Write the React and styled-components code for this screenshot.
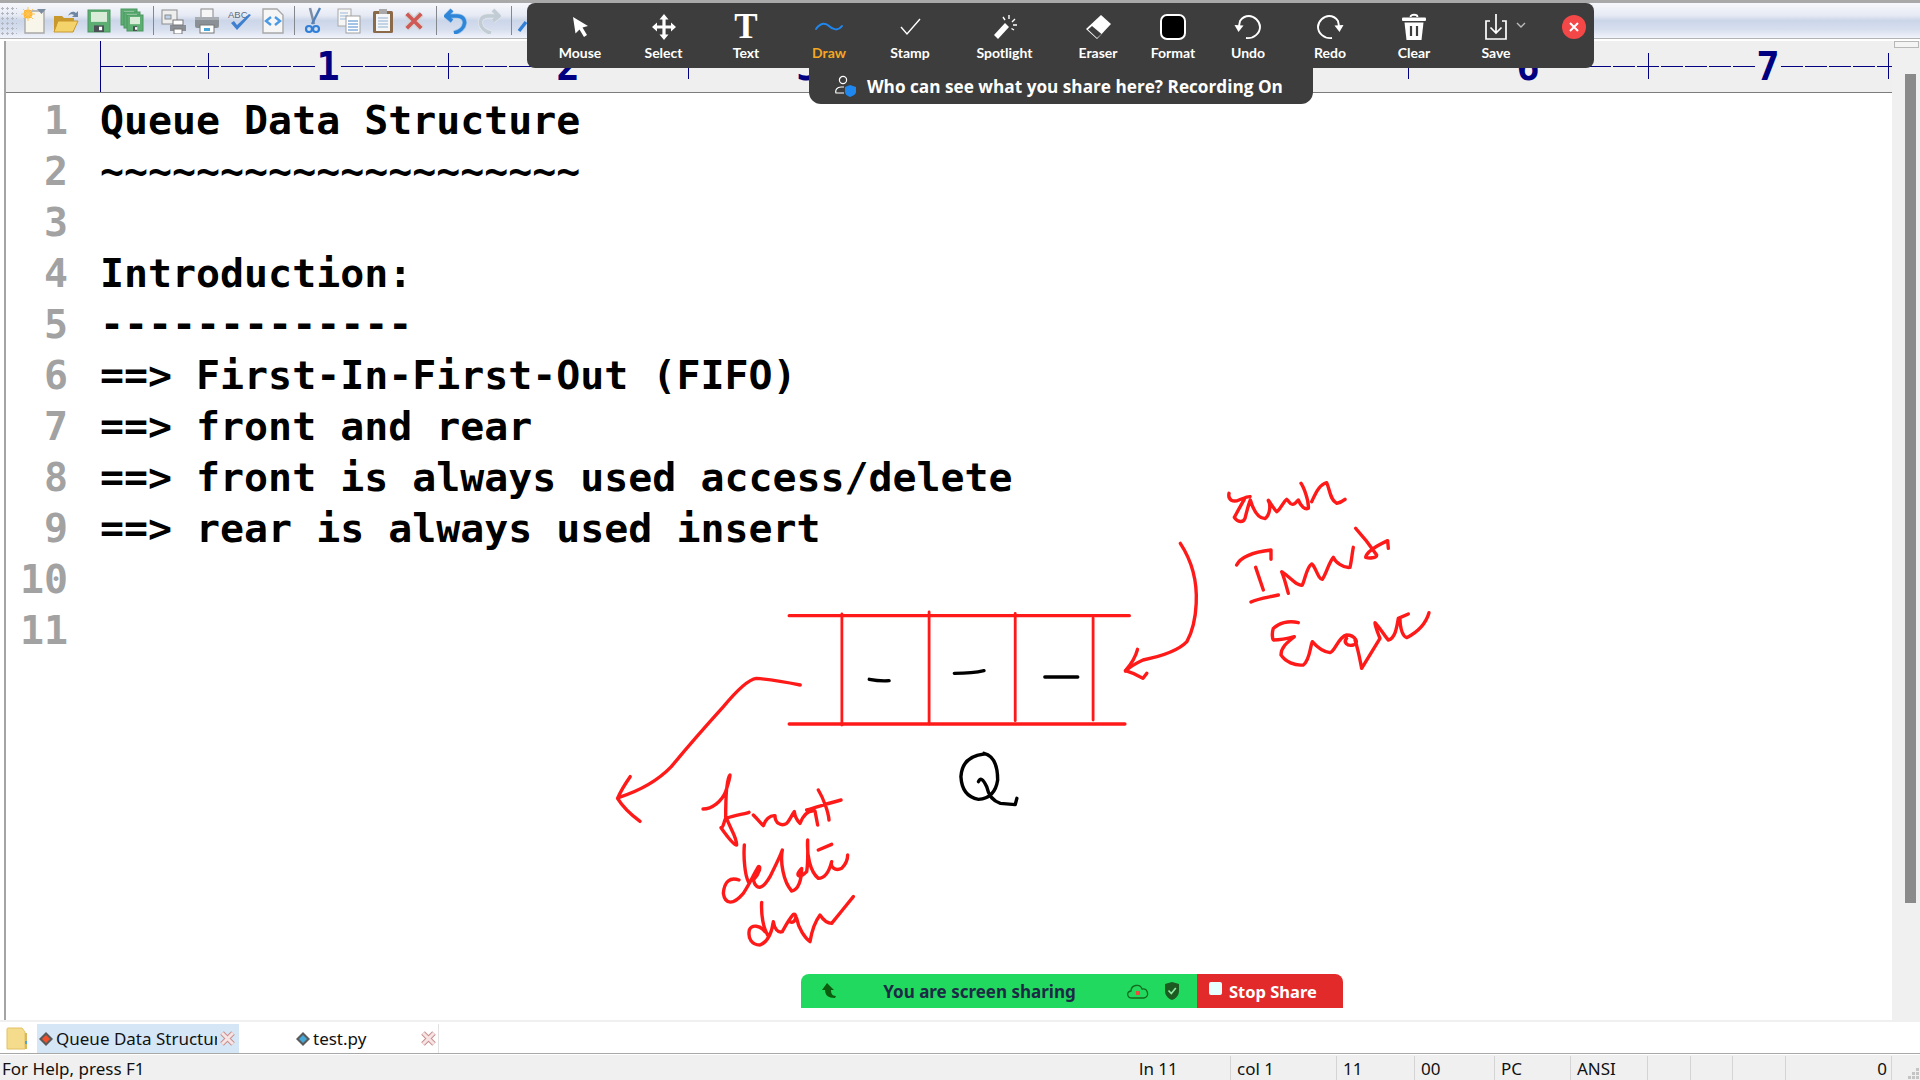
import React from 'react';
import styled, { createGlobalStyle } from 'styled-components';

const GlobalStyle = createGlobalStyle`
  html, body {
    margin: 0;
    padding: 0;
    background: #fff;
    overflow: hidden;
  }
`;

const lines = [
  'Queue Data Structure',
  '~~~~~~~~~~~~~~~~~~~~',
  '',
  'Introduction:',
  '-------------',
  '==> First-In-First-Out (FIFO)',
  '==> front and rear',
  '==> front is always used access/delete',
  '==> rear is always used insert',
  '',
  '',
];

const statusPanels = [
  { w: 98, text: 'ln 11' },
  { w: 106, text: 'col 1' },
  { w: 78, text: '11' },
  { w: 80, text: '00' },
  { w: 76, text: 'PC' },
  { w: 77, text: 'ANSI' },
  { w: 43, text: '' },
  { w: 42, text: '' },
  { w: 53, text: '' },
  { w: 106, text: '0', right: true },
];

const getZoomTools = () => [
  { label: 'Mouse', w: 84, icon: <MouseIcon /> },
  { label: 'Select', w: 83, icon: <SelectIcon /> },
  { label: 'Text', w: 82, icon: <TextGlyph>T</TextGlyph> },
  { label: 'Draw', w: 84, icon: <DrawIcon />, active: true },
  { label: 'Stamp', w: 78, icon: <StampIcon /> },
  { label: 'Spotlight', w: 111, icon: <SpotlightIcon /> },
  { label: 'Eraser', w: 76, icon: <EraserIcon /> },
  { label: 'Format', w: 74, icon: <FormatSwatch /> },
  { label: 'Undo', w: 76, icon: <UndoIcon /> },
  { label: 'Redo', w: 88, icon: <RedoIcon /> },
  { label: 'Clear', w: 80, icon: <ClearIcon /> },
  { label: 'Save', w: 84, icon: <SaveIcon /> },
];

function MouseIcon() {
  return (
    <svg width="26" height="26" viewBox="0 0 26 26">
      <path d="M6 3 L21 12 L15.5 13.5 L20 21 L17 23 L12.5 15.5 L8.5 19.5 Z" fill="#fff" />
    </svg>
  );
}

function SelectIcon() {
  return (
    <svg width="26" height="28" viewBox="0 0 26 28">
      <path d="M13 1 L17.5 6.5 H14.6 V12.4 H20 V9.5 L25 14 L20 18.5 V15.6 H14.6 V21.5 H17.5 L13 27 L8.5 21.5 H11.4 V15.6 H6 V18.5 L1 14 L6 9.5 V12.4 H11.4 V6.5 H8.5 Z" fill="#fff" />
    </svg>
  );
}

function DrawIcon() {
  return (
    <svg width="30" height="14" viewBox="0 0 30 14">
      <path d="M2 9 C7 2 12 3 15 6 C19 10 24 11 28 6" fill="none" stroke="#1f87f0" strokeWidth="2" strokeLinecap="round" />
    </svg>
  );
}

function StampIcon() {
  return (
    <svg width="24" height="20" viewBox="0 0 24 20">
      <path d="M3 10 L9 17 L22 2" fill="none" stroke="#fff" strokeWidth="1.4" />
    </svg>
  );
}

function SpotlightIcon() {
  return (
    <svg width="26" height="26" viewBox="0 0 26 26">
      <path d="M2 21 L13 9 L17 13 L6 25 Z" fill="#fff" />
      <path d="M17 1 V5 M23 5 L20 8 M25 11 H21 M11 3 L13 6 M22 16 L19.5 14.5" stroke="#fff" strokeWidth="1.4" />
    </svg>
  );
}

function EraserIcon() {
  return (
    <svg width="28" height="26" viewBox="0 0 28 26">
      <path d="M17 1 L27 10 L13 25 L2 15 Z" fill="#fff" />
      <path d="M8 12 L17.5 20 L13 24 L4 15.5 Z" fill="#3c3d3c" />
    </svg>
  );
}

function UndoIcon() {
  return (
    <svg width="28" height="26" viewBox="0 0 28 26">
      <path d="M12 24 C20 25 26 19 26 13 C26 7 20 2 15 2 C11 2 8 4 6 7 L5 12" fill="none" stroke="#fff" strokeWidth="1.9" />
      <path d="M0.5 11 L9.5 11.5 L4.5 18 Z" fill="#fff" />
    </svg>
  );
}

function RedoIcon() {
  return (
    <svg width="28" height="26" viewBox="0 0 28 26">
      <path d="M16 24 C8 25 2 19 2 13 C2 7 8 2 13 2 C17 2 20 4 22 7 L23 12" fill="none" stroke="#fff" strokeWidth="1.9" />
      <path d="M27.5 11 L18.5 11.5 L23.5 18 Z" fill="#fff" />
    </svg>
  );
}

function ClearIcon() {
  return (
    <svg width="26" height="28" viewBox="0 0 26 28">
      <path d="M9.5 4 C9.5 1 16.5 1 16.5 4" fill="none" stroke="#fff" strokeWidth="1.8" />
      <rect x="1" y="4.5" width="24" height="3.5" rx="1" fill="#fff" />
      <path d="M3.5 9.5 H22.5 L20.5 27 H5.5 Z" fill="#fff" />
      <path d="M10 13 V23 M16 13 V23" stroke="#3c3d3c" strokeWidth="2.2" />
    </svg>
  );
}

function SaveIcon() {
  return (
    <svg width="76" height="28" viewBox="0 0 76 28">
      <path d="M32 8 H28 V26 H48 V8 H44" fill="none" stroke="#fff" strokeWidth="1.7" />
      <path d="M38 1 V20 M32.5 14.5 L38 20 L43.5 14.5" fill="none" stroke="#fff" strokeWidth="1.7" />
      <path d="M59 10 L63 14 L67 10" fill="none" stroke="#bbb" strokeWidth="1.4" />
    </svg>
  );
}

function CloseGlyph() {
  return (
    <svg width="10" height="10" viewBox="0 0 10 10">
      <path d="M1 1 L9 9 M9 1 L1 9" stroke="#fff" strokeWidth="2" />
    </svg>
  );
}

function NewFileIcon() {
  return (
    <svg width="26" height="28" viewBox="0 0 26 28">
      <path d="M5 4 H24 V26 H5 Z" fill="#f8f5ea" stroke="#a8a8a8" strokeWidth="1.4" />
      <path d="M17 2 H26 L21.5 7 Z" fill="#7c8ca0" />
      <circle cx="8" cy="7" r="4.5" fill="#ffb52e" />
      <path d="M8 0 V14 M1 7 H15 M3 2 L13 12 M13 2 L3 12" stroke="#ffc65c" strokeWidth="1" />
    </svg>
  );
}

function OpenIcon() {
  return (
    <svg width="26" height="26" viewBox="0 0 26 26">
      <path d="M1 8 H9 L11 10 H21 V24 H1 Z" fill="#c9982d" />
      <path d="M5 13 H25 L20 24 H1 Z" fill="#f5d36b" stroke="#c9982d" />
      <path d="M15 8 C17 3 21 3 23 5 L25 3 V9 H19 L21 7 C19 6 17 6 15 8 Z" fill="#6f86a3" />
    </svg>
  );
}

function FloppyIcon({ x = 1, y = 2, s = 22 }) {
  return (
    <g>
      <rect x={x} y={y} width={s} height={s} fill="#5cae72" stroke="#4a9660" />
      <rect x={x + 3} y={y + 2} width={s - 6} height={s * 0.45} fill="#d8ecd8" />
      <rect x={x + 6} y={y + s * 0.7} width={s - 12} height={s * 0.3} fill="#4a5056" />
      <rect x={x + s * 0.5} y={y + s * 0.76} width={s * 0.14} height={s * 0.16} fill="#fff" />
    </g>
  );
}

function SaveFileIcon() {
  return (
    <svg width="24" height="26" viewBox="0 0 24 26">
      <FloppyIcon />
    </svg>
  );
}

function SaveAllIcon() {
  return (
    <svg width="24" height="26" viewBox="0 0 24 26">
      <FloppyIcon x={1} y={1} s={16} />
      <FloppyIcon x={4} y={4} s={16} />
      <FloppyIcon x={7} y={7} s={16} />
    </svg>
  );
}

function PreviewIcon() {
  return (
    <svg width="26" height="26" viewBox="0 0 26 26">
      <rect x="1" y="2" width="15" height="14" fill="#eee" stroke="#8c8c8c" />
      <rect x="4" y="7" width="6" height="4" fill="#bcd2ea" stroke="#8c8c8c" />
      <rect x="9" y="17" width="16" height="6" fill="#8a8f96" />
      <rect x="12" y="12" width="10" height="5" fill="#fff" stroke="#777" />
      <rect x="13" y="21" width="8" height="5" fill="#fff" stroke="#777" />
    </svg>
  );
}

function PrintIcon() {
  return (
    <svg width="26" height="26" viewBox="0 0 26 26">
      <rect x="7" y="1" width="12" height="9" fill="#f6f6f6" stroke="#888" />
      <rect x="1" y="9" width="24" height="11" rx="2" fill="#8b9097" />
      <rect x="1" y="9" width="24" height="3" fill="#a8adb4" />
      <rect x="6" y="17" width="14" height="8" fill="#fff" stroke="#777" />
      <rect x="10" y="20" width="6" height="3" fill="#4aa6d8" />
    </svg>
  );
}

function SpellIcon() {
  return (
    <svg width="26" height="26" viewBox="0 0 26 26">
      <text x="1" y="10" fontFamily="Liberation Sans, sans-serif" fontSize="9.5" fill="#5a6b82">ABC</text>
      <path d="M4 15 L10 22 L24 7 L22 6 L10 17 L7 13 Z" fill="#3f7fd0" />
    </svg>
  );
}

function CodeIcon() {
  return (
    <svg width="24" height="26" viewBox="0 0 24 26">
      <path d="M2 1 H16 L22 7 V25 H2 Z" fill="#f6f6f6" stroke="#a8a8a8" strokeWidth="1.4" />
      <path d="M10 9 L5 13 L10 17 M14 9 L19 13 L14 17" fill="none" stroke="#4b9ae6" strokeWidth="2.4" />
    </svg>
  );
}

function CutIcon() {
  return (
    <svg width="22" height="28" viewBox="0 0 22 28">
      <path d="M8 1 L12 17" stroke="#7f8ea2" strokeWidth="2.4" />
      <path d="M18 1 L10 17" stroke="#4f82bc" strokeWidth="2.4" />
      <circle cx="7" cy="22" r="3" fill="none" stroke="#2f7fd8" strokeWidth="2.2" />
      <circle cx="14" cy="22" r="3" fill="none" stroke="#2f7fd8" strokeWidth="2.2" />
    </svg>
  );
}

function CopyIcon() {
  return (
    <svg width="24" height="26" viewBox="0 0 24 26">
      <rect x="1" y="1" width="13" height="17" fill="#f6f6f6" stroke="#a8a8a8" />
      <path d="M3 5 H11 M3 8 H11 M3 11 H11" stroke="#9bb9da" />
      <rect x="9" y="8" width="14" height="17" fill="#fff" stroke="#a0a0a0" />
      <path d="M11 13 H21 M11 16 H21 M11 19 H21 M11 22 H21" stroke="#4b86c8" />
    </svg>
  );
}

function PasteIcon() {
  return (
    <svg width="22" height="26" viewBox="0 0 22 26">
      <rect x="1" y="3" width="20" height="22" rx="1.5" fill="#8b6a4a" />
      <rect x="4" y="6" width="14" height="17" fill="#f4f6f8" />
      <rect x="7" y="1" width="8" height="5" fill="#a9a9a9" />
      <path d="M6 10 H16 M6 13 H16 M6 16 H16 M6 19 H16" stroke="#8fb0d0" />
    </svg>
  );
}

function DeleteIcon() {
  return (
    <svg width="20" height="20" viewBox="0 0 22 22">
      <path d="M3 3 L19 19 M19 3 L3 19" stroke="#d2d2d2" strokeWidth="7" />
      <path d="M3 3 L19 19 M19 3 L3 19" stroke="#cf5a55" strokeWidth="4" />
    </svg>
  );
}

function ArrowBackIcon({ color, shade }) {
  return (
    <svg width="24" height="26" viewBox="0 0 24 26">
      <path d="M8 2 L2 8 L8 13 M3 8 H13 C24 8 23 22 10 25" fill="none" stroke={shade} strokeWidth="5" />
      <path d="M8 2 L2 8 L8 13 M3 8 H13 C24 8 23 22 10 25" fill="none" stroke={color} strokeWidth="3.6" />
    </svg>
  );
}

function FindIcon() {
  return (
    <svg width="22" height="26" viewBox="0 0 22 26">
      <path d="M3 23 L10 14" stroke="#2f7fd8" strokeWidth="3.4" />
    </svg>
  );
}

function FolderIcon() {
  return (
    <svg width="22" height="24" viewBox="0 0 22 24">
      <path d="M1 2 C1 1 2 1 3 1 H16 L19 5 V22 H1 Z" fill="#f4dc8c" stroke="#e2c264" />
      <path d="M19 6 H21 V22 H19 Z" fill="#d8b860" />
      <rect x="19" y="14" width="2" height="3" fill="#4aa6d8" />
    </svg>
  );
}

function DiamondIcon({ color }) {
  return (
    <svg width="14" height="14" viewBox="0 0 14 14">
      <path d="M7 0 L14 7 L7 14 L0 7 Z" fill="#5a5a5a" />
      <path d="M7 3 L11 7 L7 11 L3 7 Z" fill={color} />
    </svg>
  );
}

function TabCloseIcon() {
  return (
    <svg width="15" height="15" viewBox="0 0 15 15">
      <path d="M2 2 L13 13 M13 2 L2 13" stroke="#c88e8e" strokeWidth="5" />
      <path d="M2 2 L13 13 M13 2 L2 13" stroke="#f6e4e4" strokeWidth="3" />
    </svg>
  );
}

function StatusGrip() {
  return (
    <svg width="14" height="14" viewBox="0 0 14 14">
      <path d="M10 2 h3 v3 h-3 z M6 6 h3 v3 h-3 z M10 6 h3 v3 h-3 z M2 10 h3 v3 h-3 z M6 10 h3 v3 h-3 z M10 10 h3 v3 h-3 z" fill="#c4c4c4" />
    </svg>
  );
}

function ShareArrowIcon() {
  return (
    <svg width="16" height="18" viewBox="0 0 16 18">
      <path d="M6 1 L1 8 H4 C4 13 7 16 14 16 L15 14 C11 14 10 11 10 8 H13 Z" fill="#0b5c0f" />
    </svg>
  );
}

function CloudIcon() {
  return (
    <svg width="24" height="18" viewBox="0 0 24 18">
      <path d="M6 16 C1 16 0 10 5 9 C5 3 14 1 16 7 C22 6 24 15 18 16 Z" fill="none" stroke="#14691f" strokeWidth="1.3" />
      <rect x="10" y="9" width="4" height="4" fill="#f0483e" />
    </svg>
  );
}

function ShieldIcon() {
  return (
    <svg width="19" height="20" viewBox="-3 0 19 20">
      <path d="M8 1 L15 3 V10 C15 15 11 18 8 19 C5 18 1 15 1 10 V3 Z" fill="#1c5a22" />
      <path d="M4.5 9.5 L7.3 12.5 L11.8 7" fill="none" stroke="#8fe8a0" strokeWidth="1.7" />
    </svg>
  );
}

function NoticeIcon() {
  return (
    <svg width="22" height="22" viewBox="0 0 22 22">
      <circle cx="8" cy="5" r="3.6" fill="none" stroke="#fff" strokeWidth="1.2" />
      <path d="M9 12 H6 C2 12 0 15 1 18 H9" fill="none" stroke="#fff" strokeWidth="1.2" />
      <path d="M15 10 L21 12 V17 C21 19 18 21 15 22 C12 21 10 19 10 17 V12 Z" fill="#1f87f0" />
    </svg>
  );
}

const Drawing = () => (
  <Sketch viewBox="0 0 1920 1080">
    <g transform="translate(600 460) scale(0.5485 0.33333)">
      <Ink d="M345 467 L965 467 M345 792 L957 792" />
      <Ink d="M441 462 V795 M600 456 V792 M757 460 V782 M899 474 V780" $width={2.8} />
      <Ink d="M491 658 Q510 664 527 662 M646 640 Q680 640 700 632 M811 651 L871 651" $black />
      <Ink d="M365 675 Q320 660 285 655 Q265 660 225 740 Q170 840 130 920 Q95 980 35 1012" />
      <Ink d="M55 950 Q40 985 32 1015 Q45 1050 73 1084" />
      <Ink d="M1058 250 Q1090 330 1087 430 Q1085 500 1070 545 Q1050 580 990 600 Q970 615 958 633" />
      <Ink d="M980 568 Q975 600 958 632 Q975 640 990 655 L997 640" />
      <Ink d="M700 882 Q660 890 658 950 Q660 1010 690 1018 Q720 1015 725 960 Q725 890 700 880 M690 965 Q695 945 705 980 Q710 1020 730 1030 L757 1034 L760 1015" $black />
    </g>
    <g transform="translate(1215 470) scale(0.33333)">
      <Ink d="M42 70 C38 90 55 98 72 90 C85 85 100 78 105 80 M88 88 C78 105 70 120 58 142 C68 158 85 158 90 145 C95 125 100 105 106 90 C112 110 125 145 150 146 C165 135 168 105 160 92 C158 85 175 115 185 125 C195 120 205 95 215 88 C225 95 225 110 240 100 L250 90 C258 110 270 120 280 115 C282 90 265 50 258 40 M290 95 C300 75 310 45 335 38 C345 60 345 90 365 100 C375 98 385 92 390 88" />
      <Ink d="M65 285 C75 265 100 248 168 240 L168 268 M122 292 L145 360 M108 396 C130 385 160 382 190 375" />
      <Ink d="M220 370 C212 340 205 315 200 305 C225 320 245 350 262 345 C270 330 275 290 290 282 C300 285 310 330 322 328 C335 310 340 280 355 262 C360 275 385 295 405 292 C410 270 412 245 415 232 M422 175 C445 200 465 225 485 255 C485 265 462 265 452 262 C455 245 490 225 518 212 L520 235" />
      <Ink d="M250 458 C220 450 190 460 175 475 C170 490 172 505 175 510 C195 510 220 505 238 500 C220 515 198 530 198 555 C210 575 240 588 265 585 C285 570 285 530 292 515 C305 530 320 545 345 548 C360 545 370 500 395 495 C420 495 435 520 415 525 C395 530 385 515 395 505 M420 510 C430 540 435 570 440 595 C455 570 480 530 495 505 C485 480 478 462 480 458 C500 480 510 500 520 510 C540 505 545 475 550 445 L580 432 M555 445 C555 480 565 500 575 503 C600 490 630 470 642 428" />
    </g>
    <g transform="translate(695 765) scale(0.33333)">
      <Ink d="M24 132 C50 132 80 110 92 80 C100 55 105 40 105 30 C95 40 92 90 92 160 C85 175 85 190 78 188 C90 205 115 240 125 240 C125 215 105 190 95 160 C120 150 145 148 162 142 M175 150 C190 165 198 175 205 182 C210 165 225 150 240 152 C240 175 260 185 275 175 C285 165 290 150 298 140 C300 155 305 165 315 175 C325 150 340 135 360 138 L368 180 M370 75 C385 100 400 140 402 165 M335 135 C370 125 410 112 438 105" />
      <Ink d="M148 240 C145 280 150 330 160 350 M132 345 C105 335 88 350 85 385 C90 420 115 420 145 385 C165 355 180 320 190 305 C198 300 195 325 175 345 C185 380 205 370 225 335 C240 305 255 275 262 255 C255 290 265 350 290 378 C310 375 320 345 320 310 C300 330 310 345 335 320 C340 290 338 250 338 225 C335 270 345 320 370 340 C395 340 405 310 410 290 C405 305 420 320 440 310 C455 295 458 280 458 270 M370 255 L410 238" />
      <Ink d="M200 412 C198 450 205 490 218 510 M210 500 C195 480 170 478 163 495 C158 520 170 540 195 540 C220 530 230 505 235 470 C238 490 248 505 262 500 C270 485 280 465 295 448 C310 445 300 480 285 470 M305 460 C310 490 330 520 345 530 C350 500 360 470 375 450 C385 465 395 475 410 475 C430 450 455 420 475 395" />
    </g>
  </Sketch>
);

const App = () => (
  <Screen>
    <GlobalStyle />
    <Toolbar>
      <Grip />
      <ToolButton><NewFileIcon /></ToolButton>
      <ToolButton><OpenIcon /></ToolButton>
      <ToolButton><SaveFileIcon /></ToolButton>
      <ToolButton><SaveAllIcon /></ToolButton>
      <ToolSeparator />
      <ToolButton><PreviewIcon /></ToolButton>
      <ToolButton><PrintIcon /></ToolButton>
      <ToolButton><SpellIcon /></ToolButton>
      <ToolButton><CodeIcon /></ToolButton>
      <ToolSeparator />
      <ToolButton $w={29}><CutIcon /></ToolButton>
      <ToolButton $w={42}><CopyIcon /></ToolButton>
      <ToolButton $w={27}><PasteIcon /></ToolButton>
      <ToolButton $w={35}><DeleteIcon /></ToolButton>
      <ToolSeparator />
      <ToolButton $w={31}><ArrowBackIcon color="#2f86d8" shade="#9cc4ea" /></ToolButton>
      <ToolButton $w={35}>
        <FlipX><ArrowBackIcon color="#c2ccd4" shade="#e4e8ec" /></FlipX>
      </ToolButton>
      <ToolSeparator />
      <ToolButton $w={23}><FindIcon /></ToolButton>
    </Toolbar>

    <Workspace>
      <EditorColumn>
        <Ruler>
          <RulerTrack>
            <RulerLead />
            {[1, 2, 3, 4, 5, 6, 7].map((n) => (
              <RulerCell key={n}>
                <RulerDigit>{n}</RulerDigit>
              </RulerCell>
            ))}
            <RulerCell $end />
          </RulerTrack>
        </Ruler>
        <TextArea>
          {lines.map((line, i) => (
            <Line key={i}>
              <LineNumber>{i + 1}</LineNumber>
              <LineText>{line}</LineText>
            </Line>
          ))}
        </TextArea>
      </EditorColumn>
      <Scrollbar>
        <ScrollCap />
        <ScrollThumb />
      </Scrollbar>
    </Workspace>

    <TabBar>
      <FolderSlot><FolderIcon /></FolderSlot>
      <Tab $active>
        <DiamondIcon color="#f0512a" />
        <TabLabel>Queue Data Structure</TabLabel>
        <TabCloseIcon />
      </Tab>
      <Tab $inset={57}>
        <DiamondIcon color="#45a8d8" />
        <TabLabel>test.py</TabLabel>
        <TabCloseIcon />
      </Tab>
    </TabBar>

    <StatusBar>
      <StatusMessage>For Help, press F1</StatusMessage>
      {statusPanels.map((p, i) => (
        <StatusPanel key={i} $w={p.w} $right={p.right}>{p.text}</StatusPanel>
      ))}
      <StatusCorner><StatusGrip /></StatusCorner>
    </StatusBar>

    <Drawing />

    <ZoomNotice>
      <NoticeIcon />
      <NoticeText>Who can see what you share here? Recording On</NoticeText>
    </ZoomNotice>
    <ZoomToolbar>
      {getZoomTools().map((t) => (
        <ZoomTool key={t.label} $w={t.w} $active={t.active}>
          <ZoomIconSlot>{t.icon}</ZoomIconSlot>
          <span>{t.label}</span>
        </ZoomTool>
      ))}
      <ZoomClose><CloseGlyph /></ZoomClose>
    </ZoomToolbar>

    <ShareBar>
      <SharePane>
        <ShareArrowSlot><ShareArrowIcon /></ShareArrowSlot>
        <ShareText>You are screen sharing</ShareText>
        <CloudIcon />
        <ShieldIcon />
      </SharePane>
      <StopPane>
        <StopSquare />
        Stop Share
      </StopPane>
    </ShareBar>
  </Screen>
);

export default App;

const Screen = styled.div`
  position: relative;
  width: 1920px;
  height: 1080px;
  display: flex;
  flex-direction: column;
  background: #fff;
  overflow: hidden;
`;

const Toolbar = styled.div`
  box-sizing: border-box;
  height: 39px;
  margin-bottom: 2px;
  display: flex;
  align-items: center;
  border-top: 3px solid #a9a9a9;
  border-bottom: 1px solid #b4b4b4;
  background: linear-gradient(#f7f8fc 0%, #e6eaf4 35%, #ccd6e9 50%, #d6deee 75%, #f0f3fa 100%);
`;

const Grip = styled.div`
  width: 16.5px;
  height: 30px;
  background-image: radial-gradient(#b4b8c0 1px, transparent 1.4px);
  background-size: 5px 5px;
`;

const ToolButton = styled.div`
  width: ${(p) => p.$w || 33}px;
  flex-shrink: 0;
  display: flex;
  justify-content: center;
  align-items: center;
`;

const FlipX = styled.div`
  display: flex;
  transform: scaleX(-1);
`;

const ToolSeparator = styled.div`
  width: 1px;
  height: 29px;
  flex-shrink: 0;
  margin: 0 4px;
  background: #84888e;
`;

const Workspace = styled.div`
  flex: 1;
  min-height: 0;
  display: flex;
  margin-left: 4px;
  border-left: 2px solid #a4a4a4;
`;

const EditorColumn = styled.div`
  flex: 1;
  min-width: 0;
  display: flex;
  flex-direction: column;
`;

const Ruler = styled.div`
  box-sizing: border-box;
  height: 52px;
  flex-shrink: 0;
  display: flex;
  background: #efefef;
  border-bottom: 1px solid #7c7c7c;
`;

const RulerTrack = styled.div`
  margin-left: 94px;
  display: flex;
  border-left: 1px solid #000080;
  background-image: repeating-linear-gradient(90deg, #000080 0 22px, transparent 22px 24px);
  background-size: 100% 1px;
  background-position: 0 25px;
  background-repeat: no-repeat;
`;

const RulerLead = styled.div`
  width: 107px;
`;

const RulerCell = styled.div`
  position: relative;
  width: ${(p) => (p.$end ? '4px' : '240px')};
  display: flex;
  justify-content: center;
  align-items: center;

  &::before {
    content: '';
    position: absolute;
    left: 0;
    top: 12px;
    width: 1px;
    height: 26px;
    background: #000080;
  }
`;

const RulerDigit = styled.span`
  width: 26px;
  text-align: center;
  background: #efefef;
  color: #000080;
  font: bold 39px/30px 'DejaVu Sans Mono', monospace;
`;

const TextArea = styled.div`
  flex: 1;
  padding-top: 2px;
`;

const Line = styled.div`
  height: 51px;
  display: flex;
  align-items: center;
  font: bold 39.9px/51px 'DejaVu Sans Mono', monospace;
  white-space: pre;
`;

const LineNumber = styled.span`
  width: 62px;
  margin-right: 32px;
  text-align: right;
  color: #a2a2a2;
`;

const LineText = styled.span`
  color: #000;
`;

const Scrollbar = styled.div`
  width: 28px;
  flex-shrink: 0;
  display: flex;
  flex-direction: column;
  align-items: center;
  background: #f0f0f0;
`;

const ScrollCap = styled.div`
  box-sizing: border-box;
  width: 25px;
  height: 7px;
  background: #f4f4f4;
  border: 1px solid #b8b8b8;
`;

const ScrollThumb = styled.div`
  width: 11px;
  height: 829px;
  margin: 26px 0 0 8px;
  background: #8a8a8a;
`;

const TabBar = styled.div`
  box-sizing: border-box;
  height: 33px;
  flex-shrink: 0;
  display: flex;
  padding-top: 2px;
  border-top: 2px solid #f0f0f0;
  font: 17px 'Noto Sans', sans-serif;
  color: #111;
`;

const FolderSlot = styled.div`
  width: 37px;
  display: flex;
  align-items: center;
  padding-left: 6px;
  box-sizing: border-box;
`;

const Tab = styled.div`
  box-sizing: border-box;
  width: ${(p) => (p.$active ? 202 : 200)}px;
  display: flex;
  align-items: center;
  gap: 3px;
  padding: 0 ${(p) => (p.$active ? 4 : 2)}px 0 ${(p) => p.$inset || 2}px;
  background: ${(p) => (p.$active ? '#d5e7f6' : 'transparent')};
  border-right: ${(p) => (p.$active ? 'none' : '1px solid #e2e2e2')};
`;

const TabLabel = styled.span`
  flex: 1;
  min-width: 0;
  overflow: hidden;
  white-space: nowrap;
`;

const StatusBar = styled.div`
  box-sizing: border-box;
  height: 27px;
  flex-shrink: 0;
  display: flex;
  align-items: stretch;
  background: #f0f0f0;
  border-top: 1px solid #a8a8a8;
  box-shadow: inset 0 1px 0 #fff;
  font: 17px/26px 'Noto Sans', sans-serif;
  color: #111;
`;

const StatusMessage = styled.div`
  flex: 1;
  padding: 2px 0 0 2px;
`;

const StatusPanel = styled.div`
  box-sizing: border-box;
  width: ${(p) => p.$w}px;
  padding: 0 4px 0 6px;
  margin-top: 2px;
  text-align: ${(p) => (p.$right ? 'right' : 'left')};
  border-right: 1px solid #d4d4d4;
`;

const StatusCorner = styled.div`
  width: 28px;
  display: flex;
  align-items: flex-end;
  justify-content: flex-end;
`;

const Sketch = styled.svg`
  position: absolute;
  inset: 0;
  width: 1920px;
  height: 1080px;
  pointer-events: none;
`;

const Ink = styled.path.attrs({ fill: 'none', vectorEffect: 'non-scaling-stroke' })`
  stroke: ${(p) => (p.$black ? '#000' : '#ff1a1a')};
  stroke-width: ${(p) => p.$width || 3.4}px;
  stroke-linecap: round;
  stroke-linejoin: round;
`;

const ZoomToolbar = styled.div`
  position: absolute;
  left: 527px;
  top: 3px;
  box-sizing: border-box;
  width: 1067px;
  height: 65px;
  padding-left: 11px;
  display: flex;
  align-items: flex-start;
  background: #3c3d3c;
  border-radius: 8px;
`;

const ZoomTool = styled.div`
  width: ${(p) => p.$w}px;
  height: 65px;
  flex-shrink: 0;
  display: flex;
  flex-direction: column;
  align-items: center;
  color: ${(p) => (p.$active ? '#f5a623' : '#fff')};
  font: bold 14px/16px Lato, sans-serif;
`;

const ZoomIconSlot = styled.div`
  box-sizing: border-box;
  height: 42px;
  padding-top: 6px;
  display: flex;
  align-items: center;
  justify-content: center;
`;

const TextGlyph = styled.span`
  font: bold 35px/30px 'Liberation Serif', serif;
  color: #fff;
`;

const FormatSwatch = styled.div`
  box-sizing: border-box;
  width: 26px;
  height: 26px;
  border: 2px solid #fff;
  border-radius: 7px;
  background: #000;
`;

const ZoomClose = styled.div`
  width: 24px;
  height: 24px;
  margin: 12px 0 0 24px;
  flex-shrink: 0;
  display: flex;
  align-items: center;
  justify-content: center;
  border-radius: 50%;
  background: #f44848;
`;

const ZoomNotice = styled.div`
  position: absolute;
  left: 809px;
  top: 68px;
  box-sizing: border-box;
  width: 504px;
  height: 36px;
  padding-left: 26px;
  display: flex;
  align-items: center;
  gap: 10px;
  background: #3c3d3c;
  border-radius: 0 0 12px 12px;
`;

const NoticeText = styled.span`
  font: bold 17.2px 'Open Sans', sans-serif;
  color: #fff;
  white-space: nowrap;
`;

const ShareBar = styled.div`
  position: absolute;
  left: 801px;
  top: 974px;
  width: 542px;
  height: 34px;
  display: flex;
  border-radius: 8px 8px 0 0;
  overflow: hidden;
`;

const SharePane = styled.div`
  box-sizing: border-box;
  width: 396px;
  display: flex;
  align-items: center;
  padding-right: 17px;
  gap: 11px;
  background: #22d95f;
`;

const ShareArrowSlot = styled.div`
  width: 56px;
  display: flex;
  justify-content: center;
`;

const ShareText = styled.span`
  flex: 1;
  padding-right: 24px;
  text-align: center;
  font: bold 17px 'Noto Sans', sans-serif;
  color: #1c2a45;
`;

const StopPane = styled.div`
  flex: 1;
  display: flex;
  align-items: center;
  gap: 7px;
  padding-left: 12px;
  background: #e32a2a;
  color: #fff;
  font: bold 16.5px 'Noto Sans', sans-serif;
`;

const StopSquare = styled.div`
  width: 13px;
  height: 13px;
  margin-top: -5px;
  border-radius: 2px;
  background: #e6ffff;
`;
